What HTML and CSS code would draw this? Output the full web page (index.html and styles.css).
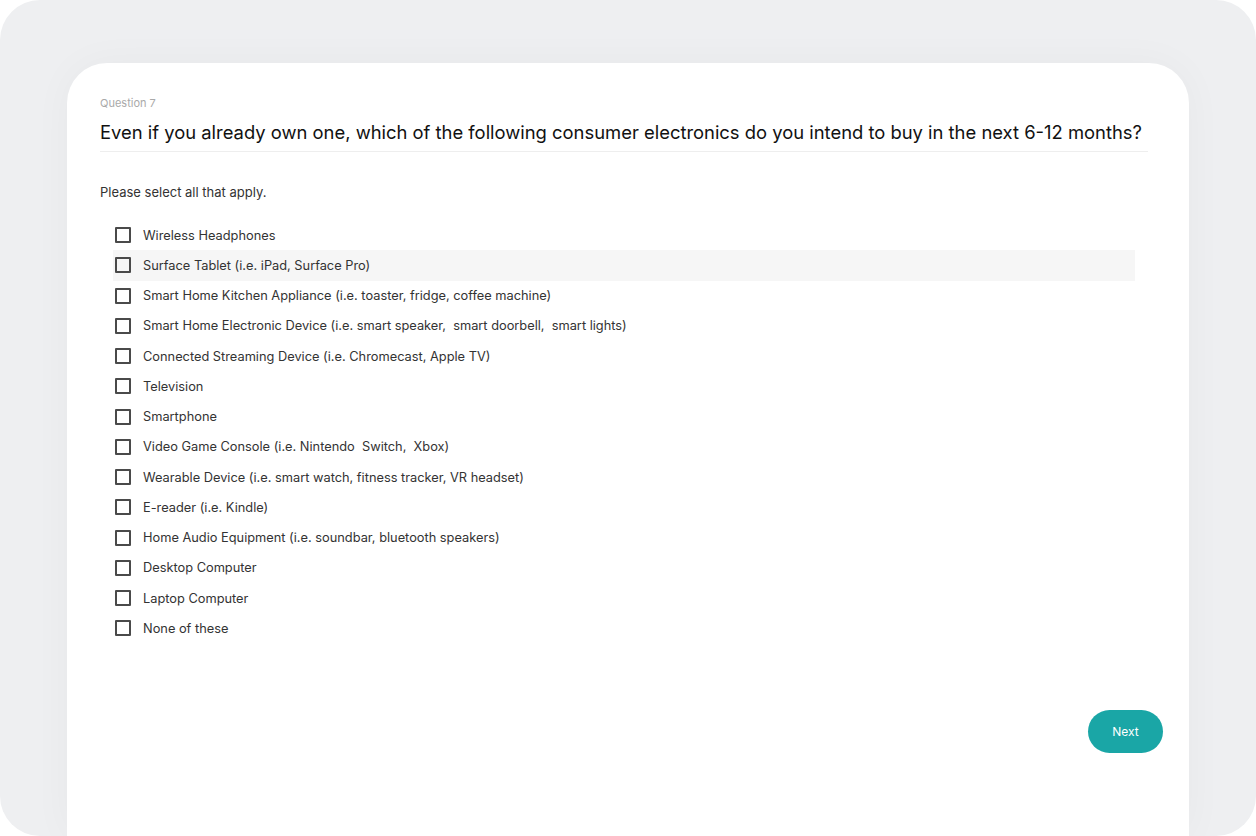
FILE: index.html
```html
<!DOCTYPE html>
<html lang="en">
<head>
<meta charset="utf-8">
<title>Question 7</title>
<link rel="stylesheet" href="styles.css">
</head>
<body>
<div class="frame">
  <main class="card">
    <header class="q-head">
      <div class="q-num">Question 7</div>
      <h1 class="q-title">Even if you already own one, which of the following consumer electronics do you intend to buy in the next 6-12 months?</h1>
    </header>
    <p class="hint">Please select all that apply.</p>
    <ul class="options">
      <li class="opt"><span class="box"></span><span class="label">Wireless Headphones</span></li>
      <li class="opt hover"><span class="box"></span><span class="label">Surface Tablet (i.e. iPad, Surface Pro)</span></li>
      <li class="opt"><span class="box"></span><span class="label">Smart Home Kitchen Appliance (i.e. toaster, fridge, coffee machine)</span></li>
      <li class="opt"><span class="box"></span><span class="label">Smart Home Electronic Device (i.e. smart speaker,&nbsp; smart doorbell,&nbsp; smart lights)</span></li>
      <li class="opt"><span class="box"></span><span class="label">Connected Streaming Device (i.e. Chromecast, Apple TV)</span></li>
      <li class="opt"><span class="box"></span><span class="label">Television</span></li>
      <li class="opt"><span class="box"></span><span class="label">Smartphone</span></li>
      <li class="opt"><span class="box"></span><span class="label">Video Game Console (i.e. Nintendo&nbsp; Switch,&nbsp; Xbox)</span></li>
      <li class="opt"><span class="box"></span><span class="label">Wearable Device (i.e. smart watch, fitness tracker, VR headset)</span></li>
      <li class="opt"><span class="box"></span><span class="label">E-reader (i.e. Kindle)</span></li>
      <li class="opt"><span class="box"></span><span class="label">Home Audio Equipment (i.e. soundbar, bluetooth speakers)</span></li>
      <li class="opt"><span class="box"></span><span class="label">Desktop Computer</span></li>
      <li class="opt"><span class="box"></span><span class="label">Laptop Computer</span></li>
      <li class="opt"><span class="box"></span><span class="label">None of these</span></li>
    </ul>
    <footer class="actions">
      <button class="next" type="button">Next</button>
    </footer>
  </main>
</div>
</body>
</html>
```

FILE: styles.css
```css
* { box-sizing: border-box; }
html, body {
  margin: 0;
  padding: 0;
  background: #ffffff;
}
body {
  font-family: Inter, "Noto Sans", "Liberation Sans", sans-serif;
  color: #222;
}
.frame {
  width: 1256px;
  height: 836px;
  background: #eeeff1;
  border-radius: 40px;
  padding: 63px 67px 0 67px;
  overflow: hidden;
}
.card {
  background: #ffffff;
  border-radius: 40px 40px 0 0;
  height: 773px;
  padding: 33px 41px 0 33px;
  box-shadow: 0 0 40px rgba(0, 0, 0, 0.035);
}
.q-head {
  border-bottom: 1px solid #eeeeee;
  padding-bottom: 7px;
}
.q-num {
  font-size: 11px;
  line-height: 14px;
  color: #a9a9a9;
}
.q-title {
  margin: 10px 0 0;
  font-size: 18.4px;
  line-height: 24px;
  font-weight: 400;
  color: #111;
}
.hint {
  margin: 31px 0 0;
  font-size: 13px;
  line-height: 18px;
  color: #333;
}
.options {
  list-style: none;
  margin: 19px 0 0 13px;
  padding: 0;
  width: 1022px;
}
.opt {
  display: flex;
  align-items: center;
  height: 30.25px;
  padding-left: 2px;
}
.opt.hover {
  background: #f6f6f6;
}
.box {
  width: 16px;
  height: 16px;
  border: 2px solid #4a4a4a;
  border-radius: 1px;
  flex: none;
}
.label {
  margin-left: 12px;
  font-size: 12.8px;
  color: #333;
}
.actions {
  display: flex;
  justify-content: flex-end;
  margin-top: 66px;
  margin-right: -15px;
}
.next {
  width: 75px;
  height: 43px;
  border: none;
  border-radius: 22px;
  background: #1aa6a6;
  color: #ffffff;
  font-family: Inter, "Noto Sans", "Liberation Sans", sans-serif;
  font-size: 12px;
  cursor: pointer;
}
```
